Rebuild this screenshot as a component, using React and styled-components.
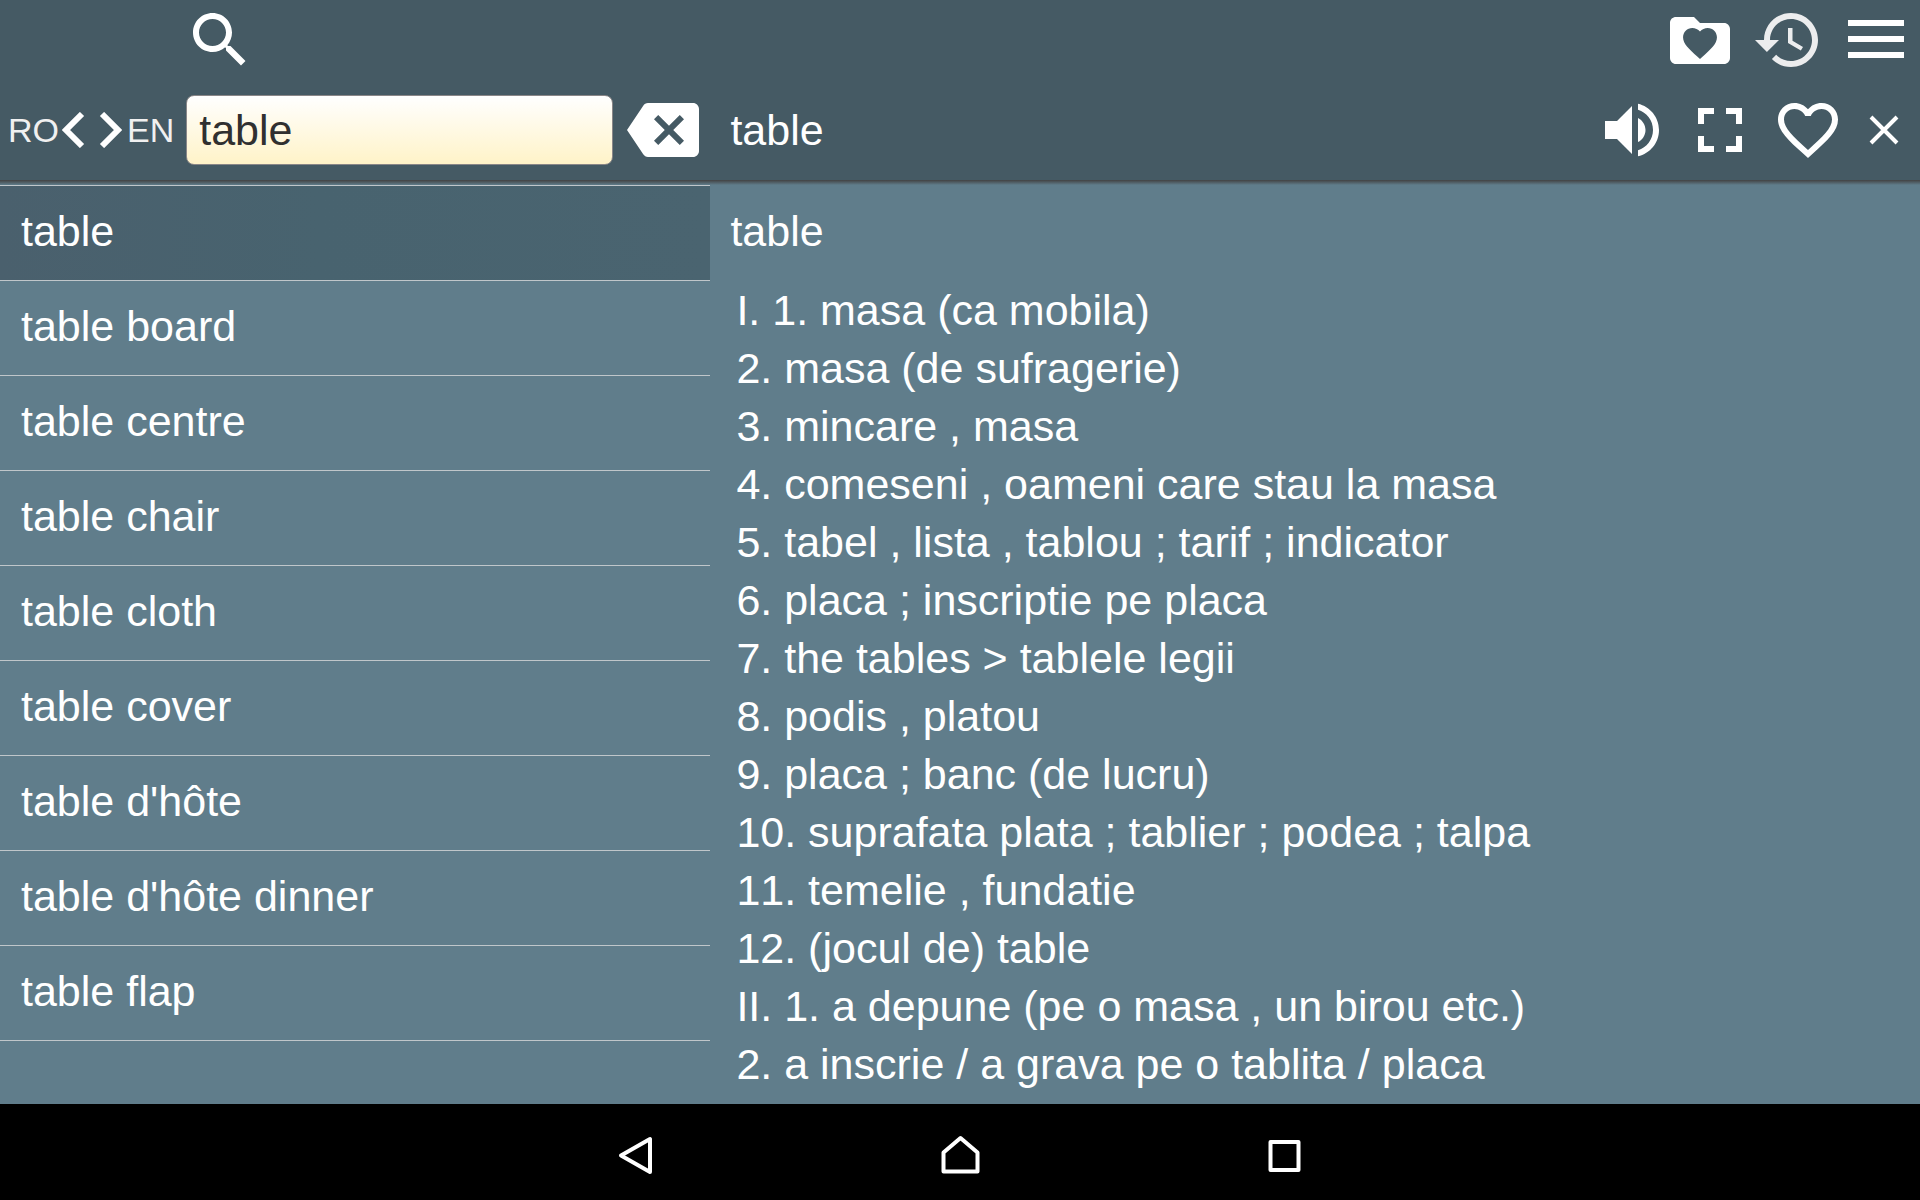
import React, { useState } from "react";
import styled, { createGlobalStyle } from "styled-components";

const GlobalStyle = createGlobalStyle`
  *, *::before, *::after { box-sizing: border-box; }
  body {
    margin: 0;
    background: #607d8b;
    color: #fff;
    font-family: "Liberation Sans", Arial, sans-serif;
    font-size: 43px;
    font-kerning: none;
  }
  button, input { font: inherit; font-kerning: inherit; color: inherit; }
  h1, h2, ol, ul { margin: 0; padding: 0; font: inherit; font-kerning: inherit; list-style: none; }
`;

const Page = styled.div`
  display: flex;
  flex-direction: column;
  min-height: 100vh;
`;

const Header = styled.header`
  background: #455a64;
`;

const Toolbar = styled.div`
  display: flex;
  align-items: center;
  justify-content: space-between;
  height: 80px;
  padding: 0 8px 0 184px;
`;

const SearchBar = styled.div`
  display: flex;
  align-items: center;
  height: 100px;
`;

const SearchSide = styled.form`
  display: flex;
  align-items: center;
  flex: 0 0 37%;
  min-width: 0;
  padding: 0 11px 0 8px;
`;

const WordSide = styled.div`
  display: flex;
  align-items: center;
  justify-content: space-between;
  flex: 1;
  min-width: 0;
  padding: 0 12px 0 20px;
`;

const Actions = styled.div`
  display: flex;
  align-items: center;
  gap: 16px;
`;

const IconButton = styled.button`
  display: flex;
  align-items: center;
  justify-content: center;
  flex: none;
  width: ${(p) => p.$width || 72}px;
  height: 72px;
  padding: 0;
  border: 0;
  background: none;
  color: ${(p) => p.$color || "#fff"};
  cursor: pointer;
`;

const LanguageButton = styled.button`
  display: flex;
  align-items: center;
  gap: 3px;
  flex: none;
  height: 72px;
  margin-right: 12px;
  padding: 0;
  border: 0;
  background: none;
  color: #f0f0f0;
  font-size: 34px;
  cursor: pointer;
`;

const SearchInput = styled.input`
  flex: 1;
  min-width: 0;
  height: 70px;
  margin-right: 14px;
  padding: 0 12px;
  border: 1px solid #8a8788;
  border-radius: 8px;
  background: linear-gradient(#fff, #fff3c8);
  color: #303030;
  outline: none;
`;

const HeaderShadow = styled.div`
  height: 5px;
  background: linear-gradient(#424242, #607d8b);
`;

const Main = styled.main`
  display: flex;
  flex: 1;
`;

const WordList = styled.ul`
  flex: 0 0 37%;
  min-width: 0;
`;

const WordItem = styled.li`
  border-bottom: 1px solid #c0c6ca;
  &:first-child { border-top: 1px solid #c0c6ca; }
`;

const WordButton = styled.button`
  display: block;
  width: 100%;
  height: 94px;
  padding: 0 21px 4px;
  border: 0;
  background: ${(p) => (p.$active ? "linear-gradient(90deg, #4a606d, #48636f 45%, #4a6470)" : "none")};
  text-align: left;
  cursor: pointer;
`;

const Article = styled.article`
  flex: 1;
  min-width: 0;
  padding: 0 20px;
`;

const Headword = styled.h2`
  line-height: 92px;
`;

const Definitions = styled.ol`
  padding: 4px 6px 0;
  line-height: 58px;
`;

const NavBar = styled.nav`
  display: flex;
  align-items: center;
  justify-content: center;
  gap: 252px;
  height: 96px;
  background: #000;
`;

const Glyph = ({ d }) => (
  <svg width="72" height="72" viewBox="0 0 24 24" fill="currentColor" aria-hidden="true">
    <path fillRule="evenodd" d={d} />
  </svg>
);

const Outline = ({ d }) => (
  <svg width="48" height="48" viewBox="0 0 48 48" fill="none" stroke="currentColor" strokeWidth="4" strokeLinejoin="round" aria-hidden="true">
    <path d={d} />
  </svg>
);

const icons = {
  search:
    "M15.5 14h-.79l-.28-.27C15.41 12.59 16 11.11 16 9.5 16 5.91 13.09 3 9.5 3S3 5.91 3 9.5 5.91 16 9.5 16c1.61 0 3.09-.59 4.23-1.57l.27.28v.79l5 4.99L20.49 19l-4.99-5zm-6 0C7.01 14 5 11.99 5 9.5S7.01 5 9.5 5 14 7.01 14 9.5 11.99 14 9.5 14z",
  favorites:
    "M10 4.33H4c-1.1 0-2 .8-2 1.9V18c0 1.1.9 2 2 2h16c1.1 0 2-.9 2-2V8.33c0-1.1-.9-2-2-2h-8l-2-2zM12 18.35l-.82-.74C8.27 14.97 6.35 13.23 6.35 11.1 6.35 9.36 7.7 8 9.43 8c.98 0 1.93.46 2.57 1.18C12.64 8.46 13.59 8 14.57 8c1.73 0 3.08 1.36 3.08 3.1 0 2.13-1.92 3.87-4.83 6.51l-.82.74z",
  history:
    "M13 3c-4.97 0-9 4.03-9 9H1l3.89 3.89.07.14L9 12H6c0-3.87 3.13-7 7-7s7 3.13 7 7-3.13 7-7 7c-1.93 0-3.68-.79-4.94-2.06l-1.42 1.42C8.27 19.99 10.51 21 13 21c4.97 0 9-4.03 9-9s-4.03-9-9-9zm-1 5v5l4.28 2.54.72-1.21-3.5-2.08V8H12z",
  menu: "M2.67 5.33h18.66v2H2.67zM2.67 10.67h18.66v2H2.67zM2.67 16h18.66v2H2.67z",
  clear:
    "M22 3H7c-.69 0-1.23.35-1.59.88L0 12l5.41 8.11c.36.53.9.89 1.59.89h15c1.1 0 2-.9 2-2V5c0-1.1-.9-2-2-2zm-3 12.59L17.59 17 14 13.41 10.41 17 9 15.59 12.59 12 9 8.41 10.41 7 14 10.59 17.59 7 19 8.41 15.41 12 19 15.59z",
  volume:
    "M3 9v6h4l5 5V4L7 9H3zm13.5 3c0-1.77-1.02-3.29-2.5-4.03v8.05c1.48-.73 2.5-2.25 2.5-4.02zM14 3.23v2.06c2.89.86 5 3.54 5 6.71s-2.11 5.85-5 6.71v2.06c4.01-.91 7-4.49 7-8.77s-2.99-7.86-7-8.77z",
  fullscreen:
    "M4.67 4.67H10v2H6.67V10h-2zM14 4.67h5.33V10h-2V6.67H14zM4.67 14h2v3.33H10v2H4.67zM17.33 14h2v5.33H14v-2h3.33z",
  heart:
    "M16.5 3c-1.74 0-3.41.81-4.5 2.09C10.91 3.81 9.24 3 7.5 3 4.42 3 2 5.42 2 8.5c0 3.78 3.4 6.86 8.55 11.54L12 21.35l1.45-1.32C18.6 15.36 22 12.28 22 8.5 22 5.42 19.58 3 16.5 3zm-4.4 15.55l-.1.1-.1-.1C7.14 14.24 4 11.39 4 8.5 4 6.5 5.5 5 7.5 5c1.54 0 3.04.99 3.57 2.36h1.87C13.46 5.99 14.96 5 16.5 5c2 0 3.5 1.5 3.5 3.5 0 2.89-3.14 5.74-7.9 10.05z",
};

const words = [
  "table",
  "table board",
  "table centre",
  "table chair",
  "table cloth",
  "table cover",
  "table d'hôte",
  "table d'hôte dinner",
  "table flap",
];

const definitions = [
  "I. 1. masa (ca mobila)",
  "2. masa (de sufragerie)",
  "3. mincare , masa",
  "4. comeseni , oameni care stau la masa",
  "5. tabel , lista , tablou ; tarif ; indicator",
  "6. placa ; inscriptie pe placa",
  "7. the tables > tablele legii",
  "8. podis , platou",
  "9. placa ; banc (de lucru)",
  "10. suprafata plata ; tablier ; podea ; talpa",
  "11. temelie , fundatie",
  "12. (jocul de) table",
  "II. 1. a depune (pe o masa , un birou etc.)",
  "2. a inscrie / a grava pe o tablita / placa",
];

export default function App() {
  const [query, setQuery] = useState("table");
  const [selected, setSelected] = useState(0);

  return (
    <Page>
      <GlobalStyle />
      <Header>
        <Toolbar>
          <IconButton aria-label="Search"><Glyph d={icons.search} /></IconButton>
          <Actions>
            <IconButton aria-label="Favorites"><Glyph d={icons.favorites} /></IconButton>
            <IconButton aria-label="History" $color="#ecedee"><Glyph d={icons.history} /></IconButton>
            <IconButton aria-label="Menu"><Glyph d={icons.menu} /></IconButton>
          </Actions>
        </Toolbar>
        <SearchBar>
          <SearchSide onSubmit={(e) => e.preventDefault()}>
            <LanguageButton type="button" aria-label="Switch languages RO EN">
              <span>RO</span>
              <svg width="62" height="36" viewBox="0 0 62 36" fill="none" stroke="#fff" strokeWidth="6" aria-hidden="true">
                <path d="M20 2 4 18 20 34M40 2 56 18 40 34" />
              </svg>
              <span>EN</span>
            </LanguageButton>
            <SearchInput
              type="text"
              aria-label="Search word"
              value={query}
              onChange={(e) => setQuery(e.target.value)}
            />
            <IconButton type="button" aria-label="Clear" onClick={() => setQuery("")}>
              <Glyph d={icons.clear} />
            </IconButton>
          </SearchSide>
          <WordSide>
            <h1>{words[selected]}</h1>
            <Actions>
              <IconButton aria-label="Listen"><Glyph d={icons.volume} /></IconButton>
              <IconButton aria-label="Full screen"><Glyph d={icons.fullscreen} /></IconButton>
              <IconButton aria-label="Add to favorites"><Glyph d={icons.heart} /></IconButton>
              <IconButton aria-label="Close" $width={48}>
                <Outline d="M11 11 37 37M37 11 11 37" />
              </IconButton>
            </Actions>
          </WordSide>
        </SearchBar>
      </Header>
      <HeaderShadow />
      <Main>
        <WordList>
          {words.map((word, i) => (
            <WordItem key={word}>
              <WordButton $active={i === selected} onClick={() => setSelected(i)}>{word}</WordButton>
            </WordItem>
          ))}
        </WordList>
        <Article>
          <Headword>{words[selected]}</Headword>
          <Definitions>
            {definitions.map((line) => (
              <li key={line}>{line}</li>
            ))}
          </Definitions>
        </Article>
      </Main>
      <NavBar aria-label="System">
        <IconButton aria-label="Back"><Outline d="M38 11V44L9 27.5Z" /></IconButton>
        <IconButton aria-label="Home"><Outline d="M24.5 10 41.5 24.5V43.5H7.5V24.5Z" /></IconButton>
        <IconButton aria-label="Recent apps"><Outline d="M10.5 14H38.5V42H10.5Z" /></IconButton>
      </NavBar>
    </Page>
  );
}
